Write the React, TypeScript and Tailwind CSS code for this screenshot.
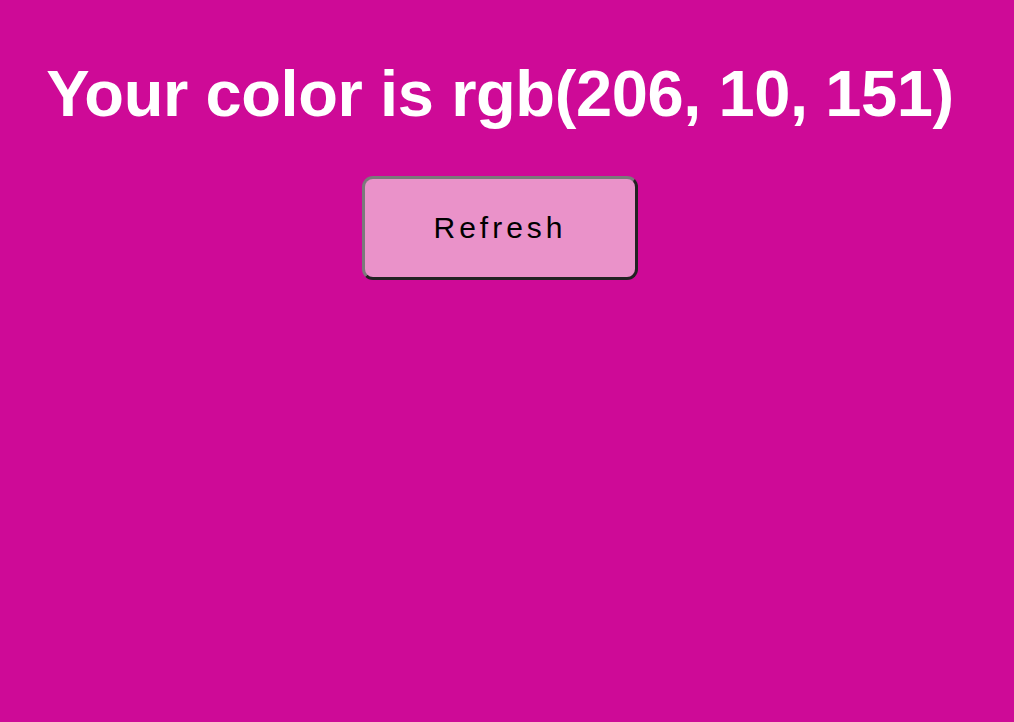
export default function App() {
  return (
    <div className="min-h-[722px] w-full bg-[#ce0a97] pr-[14px] flex flex-col items-center" style={{ fontFamily: '"Liberation Sans", Arial, sans-serif' }}>
      <h1 className="mt-[57px] text-[65px] leading-[1.15] font-bold text-white tracking-[-0.4px]">
        Your color is rgb(206, 10, 151)
      </h1>
      <button className="mt-[44px] w-[276px] h-[104px] rounded-[11px] border-[3px] border-t-[#7a7a7a] border-l-[#7a7a7a] border-r-[#222] border-b-[#222] bg-[#ea92c9] text-black text-[30px] tracking-[4px]">
        Refresh
      </button>
    </div>
  );
}
